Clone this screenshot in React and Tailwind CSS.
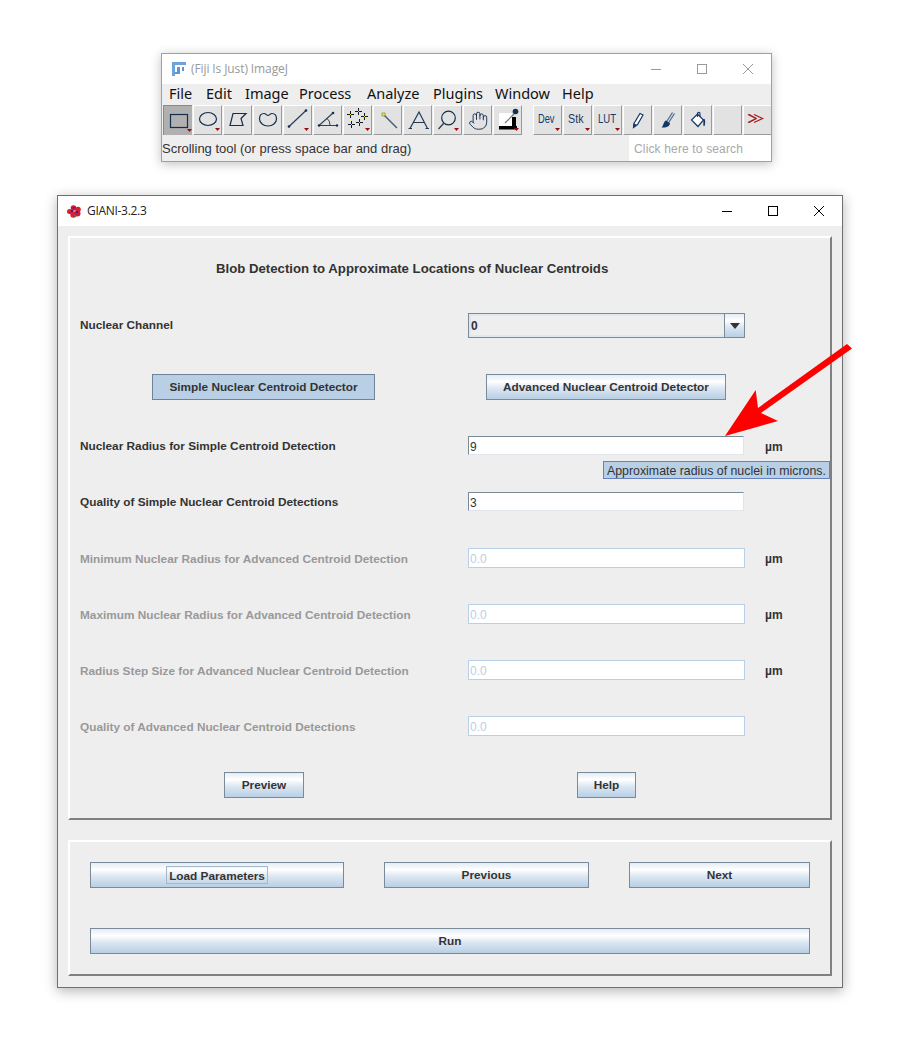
import React from "react";

const NAVY = "#12304d";
const RED = "#9a0a0a";
const SANS = { fontFamily: '"Liberation Sans", sans-serif' };

function Tri({ x = 23 }) {
  return <polygon points={`${x},23 ${x + 5},23 ${x + 2.5},26`} fill={RED} />;
}

const icons = {
  rect: (
    <>
      <rect x="6.5" y="8.5" width="17" height="13" fill="none" stroke={NAVY} strokeWidth="1.2" />
      <Tri />
    </>
  ),
  oval: (
    <>
      <ellipse cx="15" cy="14" rx="8.5" ry="6.5" fill="none" stroke={NAVY} strokeWidth="1.2" />
      <Tri x={22} />
    </>
  ),
  poly: <polygon points="7,20.5 10,8.5 23,8.5 18,13.5 20,20.5" fill="none" stroke={NAVY} strokeWidth="1.2" />,
  free: (
    <path d="M6.500 14c0-3.500 2-5.500 4.500-5.500 2 0 2.500 2 4 2s2-2 4-2c2.500 0 4.500 2 4.500 5.500 0 4-4 7-8.500 7s-8.500-3-8.500-7z" fill="none" stroke={NAVY} strokeWidth="1.2" />
  ),
  line: (
    <>
      <line x1="6" y1="21.500" x2="23" y2="5.500" stroke="#2b4258" strokeWidth="1.2" />
      <circle cx="6" cy="21.500" r="1.300" fill={NAVY} />
      <circle cx="23" cy="5.500" r="1.300" fill={NAVY} />
      <Tri x={21} />
    </>
  ),
  angle: (
    <>
      <path d="M20 8L6 20.500H24" fill="none" stroke="#2b4258" strokeWidth="1.1" />
      <path d="M14 13.500Q17 15.500 17 20" fill="none" stroke="#2b4258" strokeWidth="1" />
      <circle cx="20" cy="8" r="1.300" fill={NAVY} />
      <circle cx="6" cy="20.500" r="1.200" fill={NAVY} />
      <circle cx="24" cy="20.500" r="1.200" fill={NAVY} />
    </>
  ),
  point: (
    <>
      {[[7, 9], [15, 6], [21, 11], [8, 19], [16, 17]].map(([x, y]) => (
        <g key={`${x}-${y}`} shapeRendering="crispEdges">
          <path d={`M${x - 3} ${y + 0.5}h7M${x + 0.5} ${y - 3}v7`} stroke="#101a24" strokeWidth="1" />
          <rect x={x} y={y} width="1" height="1" fill="#ffee00" />
        </g>
      ))}
      <Tri x={22} />
    </>
  ),
  wand: (
    <>
      <line x1="11" y1="10" x2="24" y2="23" stroke="#4b6075" strokeWidth="1.500" />
      <rect x="9" y="8" width="3" height="3" fill="#ffee00" stroke="#55604a" strokeWidth=".5" />
    </>
  ),
  text: (
    <path d="M7 23.500L16 7L24.500 23.500M10 17.500H21.500M5.500 23.500H9M22.500 23.500H26" fill="none" stroke="#1f3a55" strokeWidth="1.200" />
  ),
  zoom: (
    <>
      <circle cx="15.500" cy="13" r="6.800" fill="none" stroke={NAVY} strokeWidth="1.200" />
      <line x1="11" y1="18" x2="5.500" y2="24" stroke="#2b4258" strokeWidth="1.400" />
      <Tri x={21} />
    </>
  ),
  hand: (
    <g transform="translate(5 5.500) scale(.85)" fill="none" stroke="#12304d" strokeWidth="1.100" strokeLinecap="round" strokeLinejoin="round">
      <path d="M18 11V6a2 2 0 0 0-2-2a2 2 0 0 0-2 2" />
      <path d="M14 10V4a2 2 0 0 0-2-2a2 2 0 0 0-2 2v2" />
      <path d="M10 10.500V6a2 2 0 0 0-2-2a2 2 0 0 0-2 2v8" />
      <path d="M18 8a2 2 0 1 1 4 0v6a8 8 0 0 1-8 8h-2c-2.800 0-4.500-.860-5.990-2.340l-3.600-3.600a2 2 0 0 1 2.830-2.820L7 15" />
    </g>
  ),
  dropper: (
    <>
      <rect x="6" y="8" width="13" height="13" fill="#fff" />
      <rect x="6" y="21" width="18" height="3.500" fill="#000" />
      <rect x="19" y="12" width="4" height="12" fill="#000" />
      <line x1="12" y1="18" x2="21" y2="9" stroke="#6b7a88" strokeWidth="1.200" />
      <circle cx="22.500" cy="6.500" r="2.800" fill={NAVY} />
      <Tri x={21} />
    </>
  ),
  dev: (
    <>
      <text x="5" y="18" fontSize="13" fill="#123a6b" style={SANS} textLength="16.500" lengthAdjust="spacingAndGlyphs">Dev</text>
      <Tri x={22} />
    </>
  ),
  stk: (
    <>
      <text x="5" y="18" fontSize="13" fill="#123a6b" style={SANS} textLength="15.500" lengthAdjust="spacingAndGlyphs">Stk</text>
      <Tri x={22} />
    </>
  ),
  lut: (
    <>
      <text x="5" y="18" fontSize="13" fill="#123a6b" style={SANS} textLength="18" lengthAdjust="spacingAndGlyphs">LUT</text>
      <Tri x={22} />
    </>
  ),
  pencil: (
    <>
      <path d="M17 8.500l3 1.500-5.500 9.500-4 3 .500-4z" fill="#fff" stroke="#12386b" strokeWidth="1.200" />
      <path d="M10 22.800l.600-4.500 3.500 1.700z" fill="#12386b" />
    </>
  ),
  brush: (
    <>
      <path d="M19.500 7.500L14 16M21.500 8.500L16 17" stroke="#4d6c90" strokeWidth="1.300" fill="none" />
      <path d="M13 15.500l4 2.500c0 3-3 5-8.500 4.500 2-1.500 2-6 4.500-7z" fill="#12386b" />
    </>
  ),
  fill: (
    <>
      <path d="M14.500 9l6 6-5.500 6.500-6.500-6.500z" fill="#fff" stroke="#12386b" strokeWidth="1.200" />
      <path d="M14.500 12V8.500c0-1.500 2.500-1.500 2.500 0V12" fill="none" stroke="#12386b" strokeWidth="1.100" />
      <path d="M20 14h1.500c1 1 .800 5.500 0 7h-1c-.500-2 .300-4-.500-7z" fill="#12386b" />
    </>
  ),
  more: (
    <path d="M5 9.500l8 4-8 4M6 9.500l7.500 4M6 17.500l7.500-4M11 9.500l8.500 4-8.500 4" fill="none" stroke="#a31f1f" strokeWidth="1.300" />
  ),
  blank: null,
};

function Tool({ name, active }) {
  return (
    <div
      className={
        active
          ? "w-[29px] h-[30px] mr-px shrink-0 bg-[#b0b0b0] border-t border-l border-[#8a8a8a]"
          : "w-[29px] h-[30px] mr-px shrink-0 bg-[#e2e2e2] border-t border-l border-white border-b border-r border-b-[#9a9a9a] border-r-[#9a9a9a]"
      }
    >
      <svg width="29" height="30" viewBox="0 0 29 30" className={active ? "block" : "block -mt-px -ml-px"}>
        {icons[name]}
      </svg>
    </div>
  );
}

function WinBtn({ kind, color }) {
  return (
    <div className="w-[46px] h-full flex items-center justify-center">
      <svg width="12" height="12" viewBox="0 0 12 12" fill="none" stroke={color} strokeWidth="1">
        {kind === "min" && <line x1="1" y1="6.500" x2="11" y2="6.500" />}
        {kind === "max" && <rect x="1.500" y="1.500" width="9" height="9" />}
        {kind === "close" && <path d="M1 1L11 11M11 1L1 11" />}
      </svg>
    </div>
  );
}

function WinControls({ color }) {
  return (
    <div className="flex h-full">
      <WinBtn kind="min" color={color} />
      <WinBtn kind="max" color={color} />
      <WinBtn kind="close" color={color} />
    </div>
  );
}

const metal = "bg-[linear-gradient(180deg,#e3ecf5_0%,#ffffff_28%,#dce7f2_55%,#b8cfe5_100%)]";

function MetalButton({ className = "", children }) {
  return (
    <div className={`h-[26px] pt-[2px] flex items-center justify-center border border-[#7a8a99] text-[11.800px] font-bold text-[#333333] ${metal} ${className}`}>
      {children}
    </div>
  );
}

function Field({ value, disabled }) {
  return (
    <div
      className={
        disabled
          ? "w-[277px] h-[20px] bg-white border border-[#b8cfe5] pl-px text-xs leading-[21px] text-[#b8cfe5]"
          : "w-[276px] h-[19px] bg-white border-t border-l border-[#7a8a99] border-b border-r border-b-[#dfe5ea] border-r-[#dfe5ea] pl-px text-xs leading-[20px] text-[#333333]"
      }
    >
      {value}
    </div>
  );
}

function Row({ label, value, unit, disabled, className = "" }) {
  return (
    <div className={`flex items-center h-[20px] pl-[10px] ${className}`}>
      <div className={`w-[388px] pt-[3px] text-[11.800px] font-bold ${disabled ? "text-[#999999]" : "text-[#333333]"}`}>{label}</div>
      <Field value={value} disabled={disabled} />
      {unit && <div className={`text-xs font-bold text-[#333333] ${disabled ? "ml-[20px] pt-px" : "ml-[21px] pt-[3px]"}`}>{unit}</div>}
    </div>
  );
}

const Panel = ({ className = "", children }) => (
  <div className={`border-2 border-t-white border-l-white border-r-[#808080] border-b-[#808080] ${className}`}>{children}</div>
);

const menus = [
  ["File", "w-[37px]"],
  ["Edit", "w-[39px]"],
  ["Image", "w-[54px]"],
  ["Process", "w-[68px]"],
  ["Analyze", "w-[66px]"],
  ["Plugins", "w-[62px]"],
  ["Window", "w-[67px]"],
  ["Help", "w-[40px]"],
];

const tools1 = ["rect", "oval", "poly", "free", "line", "angle", "point", "wand", "text", "zoom", "hand", "dropper"];
const tools2 = ["dev", "stk", "lut", "pencil", "brush", "fill", "blank", "more"];

export default function App() {
  return (
    <div className="relative w-[915px] h-[1041px] bg-white overflow-hidden pt-[53px] font-['Liberation_Sans',Arial,sans-serif]">
      {/* ImageJ window */}
      <div className="ml-[161px] w-[611px] h-[109px] border border-[#a0a0a0] bg-[#eeeeee] shadow-[0_2px_10px_rgba(0,0,0,0.25)] flex flex-col overflow-hidden">
        <div className="h-[30px] shrink-0 bg-white flex items-center justify-between">
          <div className="flex items-center pl-[10px]">
            <svg width="14" height="14" viewBox="0 0 14 14" className="shrink-0" shapeRendering="crispEdges">
              <rect width="14" height="3" fill="#6ea4dc" />
              <rect width="3" height="14" fill="#6ea4dc" />
              <rect x="5" y="5" width="2.500" height="6" fill="#5f96d0" />
              <rect x="3" y="10" width="4.500" height="2" fill="#5f96d0" />
              <rect x="9.500" y="5" width="2.500" height="4" fill="#5f96d0" />
            </svg>
            <span className="ml-[5px] text-xs text-[#999999] font-['Open_Sans',sans-serif] tracking-[-0.1px]">(Fiji Is Just) ImageJ</span>
          </div>
          <WinControls color="#999999" />
        </div>
        <div className="h-[21px] pb-[2px] shrink-0 flex items-center pl-[7px] text-[14.500px] text-[#111111] font-['Noto_Sans',sans-serif]">
          {menus.map(([m, w]) => (
            <div key={m} className={w}>{m}</div>
          ))}
        </div>
        <div className="h-[30px] shrink-0 flex pl-px">
          {tools1.map((t, i) => (
            <Tool key={t} name={t} active={i === 0} />
          ))}
          <div className="w-[10px] shrink-0" />
          {tools2.map((t) => (
            <Tool key={t} name={t} />
          ))}
        </div>
        <div className="h-[26px] shrink-0 flex items-center justify-between">
          <div className="pt-[2px] text-[13px] text-[#333333]">Scrolling tool (or press space bar and drag)</div>
          <div className="w-[142px] h-full bg-white flex items-center pl-[5px] pt-[2px] text-xs text-[#a8a8a8] tracking-[0.15px]">Click here to search</div>
        </div>
      </div>

      {/* GIANI window */}
      <div className="ml-[57px] mt-[33px] w-[786px] h-[793px] border border-[#707070] bg-[#eeeeee] shadow-[0_3px_12px_rgba(0,0,0,0.3)] flex flex-col">
        <div className="h-[30px] shrink-0 bg-white flex items-center justify-between">
          <div className="flex items-center pl-[9px]">
            <svg width="14" height="13" viewBox="0 0 14 13" className="shrink-0">
              <circle cx="2.500" cy="6.500" r="2.500" fill="#d8202c" />
              <circle cx="6.500" cy="3" r="2.800" fill="#d01830" />
              <circle cx="11" cy="4.500" r="2.800" fill="#d8202c" />
              <circle cx="6.500" cy="9.500" r="3.200" fill="#d8202c" />
              <circle cx="10.500" cy="8.500" r="3" fill="#d01838" />
              <rect x="4" y="5" width="2" height="2" fill="#3020a0" />
              <rect x="9" y="6" width="2" height="2" fill="#3020a0" />
              <rect x="6" y="2" width="1.500" height="1.500" fill="#3020a0" />
              <rect x="2" y="7" width="1.500" height="1.500" fill="#7020a0" />
              <rect x="7" y="10" width="1.500" height="1.500" fill="#20a060" />
            </svg>
            <span className="ml-[6px] text-xs text-[#222222] font-['Open_Sans',sans-serif] tracking-[-0.3px]">GIANI-3.2.3</span>
          </div>
          <WinControls color="#000000" />
        </div>

        <div className="flex-1 flex flex-col px-[10px] pt-[10px]">
          <Panel className="h-[584px] flex flex-col">
            <div className="mt-[21px] h-[20px] flex items-center text-[13.200px] font-bold text-[#333333] pl-[146px]">
              Blob Detection to Approximate Locations of Nuclear Centroids
            </div>
            <div className="mt-[34px] h-[25px] flex items-center pl-[10px]">
              <div className="w-[388px] text-[11.800px] font-bold text-[#333333]">Nuclear Channel</div>
              <div className="w-[277px] h-[25px] flex border border-[#7a8a99] bg-[#eeeeee]">
                <div className="flex-1 border-2 border-[#dfe7f0] border-r-0 text-xs font-bold text-[#333333] leading-[21px]">0</div>
                <div className={`w-[20px] border-l border-[#7a8a99] flex items-center justify-center ${metal}`}>
                  <svg width="10" height="6" viewBox="0 0 10 6"><polygon points="0,0 10,0 5,6" fill="#333333" /></svg>
                </div>
              </div>
            </div>
            <div className="mt-[36px] flex">
              <div className="ml-[82px] w-[223px] h-[26px] pt-[2px] flex items-center justify-center border border-[#6f8296] bg-[#b8cfe5] text-[11.800px] font-bold text-[#333333]">
                Simple Nuclear Centroid Detector
              </div>
              <MetalButton className="ml-[111px] w-[240px]">Advanced Nuclear Centroid Detector</MetalButton>
            </div>
            <Row className="mt-[35px]" label="Nuclear Radius for Simple Centroid Detection" value="9" unit="µm" />
            <Row className="mt-[36px]" label="Quality of Simple Nuclear Centroid Detections" value="3" />
            <Row className="mt-[37px]" label="Minimum Nuclear Radius for Advanced Centroid Detection" value="0.0" unit="µm" disabled />
            <Row className="mt-[36px]" label="Maximum Nuclear Radius for Advanced Centroid Detection" value="0.0" unit="µm" disabled />
            <Row className="mt-[36px]" label="Radius Step Size for Advanced Nuclear Centroid Detection" value="0.0" unit="µm" disabled />
            <Row className="mt-[36px]" label="Quality of Advanced Nuclear Centroid Detections" value="0.0" disabled />
            <div className="mt-[36px] flex">
              <MetalButton className="ml-[154px] w-[80px]">Preview</MetalButton>
              <MetalButton className="ml-[273px] w-[59px]">Help</MetalButton>
            </div>
          </Panel>
          <Panel className="mt-[20px] h-[136px] flex flex-col pt-[20px]">
            <div className="flex pl-[20px]">
              <MetalButton className="w-[254px]">
                <span className="-mt-[2px] border border-[#a3b8cc] h-[18px] leading-[18px] w-[102px] text-center block">Load Parameters</span>
              </MetalButton>
              <MetalButton className="ml-[40px] w-[205px]">Previous</MetalButton>
              <MetalButton className="ml-[40px] w-[181px]">Next</MetalButton>
            </div>
            <div className="mt-[40px] pl-[20px]">
              <MetalButton className="w-[720px]">Run</MetalButton>
            </div>
          </Panel>
        </div>
      </div>

      {/* Tooltip overlay */}
      <div className="absolute left-[603px] top-[461px] w-[227px] h-[18px] bg-[#b8cfe5] border border-[#6382bf] text-[12.350px] leading-[18px] pl-[3px] text-[#333333] whitespace-nowrap">
        Approximate radius of nuclei in microns.
      </div>

      {/* Red arrow annotation */}
      <svg className="absolute left-0 top-0 pointer-events-none" width="915" height="1041" viewBox="0 0 915 1041">
        <polygon points="847,344 852,348.500 761,413 778,421 725,436 755.700,390 758,408" fill="#ff0000" />
      </svg>
    </div>
  );
}
